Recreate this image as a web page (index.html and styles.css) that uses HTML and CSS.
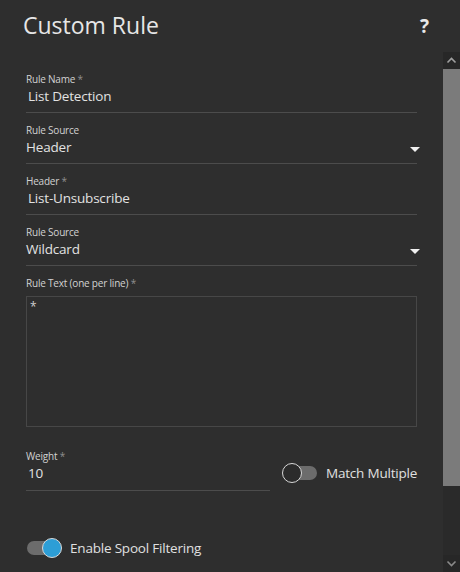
FILE: index.html
```html
<!DOCTYPE html>
<html>
<head>
<meta charset="utf-8">
<link rel="stylesheet" href="styles.css">
</head>
<body>
<div class="dialog">
  <div class="header">
    <div class="title">Custom Rule</div>
    <div class="help">?</div>
  </div>
  <div class="body">
    <div class="content">
      <div class="field">
        <div class="label">Rule Name <span class="req">*</span></div>
        <div class="value input">List Detection</div>
      </div>
      <div class="field">
        <div class="label">Rule Source</div>
        <div class="value select"><span>Header</span><span class="caret"></span></div>
      </div>
      <div class="field">
        <div class="label">Header <span class="req">*</span></div>
        <div class="value input">List-Unsubscribe</div>
      </div>
      <div class="field">
        <div class="label">Rule Source</div>
        <div class="value select"><span>Wildcard</span><span class="caret"></span></div>
      </div>
      <div class="area-field">
        <div class="label">Rule Text (one per line) <span class="req">*</span></div>
        <div class="textarea">*</div>
      </div>
      <div class="weight-row">
        <div class="field weight">
          <div class="label">Weight <span class="req">*</span></div>
          <div class="value input">10</div>
        </div>
        <div class="toggle-row">
          <div class="toggle off"><div class="track"></div><div class="knob"></div></div>
          <span class="toggle-label">Match Multiple</span>
        </div>
      </div>
      <div class="toggle-row spool">
        <div class="toggle on"><div class="track"></div><div class="knob"></div></div>
        <span class="toggle-label">Enable Spool Filtering</span>
      </div>
    </div>
    <div class="scrollbar">
      <div class="sb-btn up"><svg width="17" height="17" viewBox="0 0 17 17"><path d="M4.5 10.5 L8.5 6.5 L12.5 10.5" fill="none" stroke="#a0a0a0" stroke-width="1.6"/></svg></div>
      <div class="sb-thumb"></div>
      <div class="sb-track"></div>
      <div class="sb-btn down"><svg width="17" height="17" viewBox="0 0 17 17"><path d="M4.5 6.5 L8.5 10.5 L12.5 6.5" fill="none" stroke="#8a8a8a" stroke-width="1.6"/></svg></div>
    </div>
  </div>
</div>
</body>
</html>
```

FILE: styles.css
```css
html, body {
  margin: 0;
  padding: 0;
  background: #2e2e2e;
  font-family: "Open Sans", "Noto Sans", sans-serif;
  color: #e2e2e2;
}
.dialog {
  width: 460px;
  height: 572px;
  display: flex;
  flex-direction: column;
  overflow: hidden;
}
.header {
  height: 52px;
  flex: none;
  display: flex;
  align-items: flex-start;
  justify-content: space-between;
  padding: 0 31px 0 23px;
  box-sizing: border-box;
}
.title {
  font-size: 23px;
  line-height: 30px;
  margin-top: 10px;
  color: #e6e6e6;
}
.help {
  font-size: 19px;
  font-weight: 700;
  line-height: 26px;
  margin-top: 13px;
  color: #e8e8e8;
}
.body {
  flex: 1;
  display: flex;
  min-height: 0;
}
.content {
  flex: 1;
  padding: 21px 26px 0 26px;
}
.field {
  border-bottom: 1px solid #4c4c4c;
  padding-bottom: 6px;
  margin-bottom: 11px;
}
.label {
  font-size: 10px;
  line-height: 13px;
  color: #d2d2d2;
  letter-spacing: -0.2px;
}
.req {
  color: #8e8e8e;
}
.value {
  font-size: 13.5px;
  line-height: 20px;
  color: #e2e2e2;
  letter-spacing: -0.2px;
}
.value.input {
  padding-left: 2px;
}
.value.select {
  display: flex;
  justify-content: space-between;
  align-items: center;
}
.caret {
  width: 0;
  height: 0;
  border-left: 5.5px solid transparent;
  border-right: 5.5px solid transparent;
  border-top: 5.5px solid #f0f0f0;
  margin-right: -3px;
  margin-top: 4px;
}
.area-field .label {
  margin-bottom: 6px;
}
.textarea {
  height: 125px;
  border: 1px solid #474747;
  font-size: 12px;
  line-height: 16px;
  padding: 2px 3px;
  box-sizing: content-box;
  color: #cfcfcf;
}
.weight-row {
  display: flex;
  align-items: flex-start;
  gap: 12px;
  margin-top: 23px;
}
.field.weight {
  width: 244px;
  flex: none;
  padding-bottom: 7px;
  margin-bottom: 0;
}
.weight-row .toggle-row {
  margin-top: 13px;
  flex: none;
}
.toggle-row {
  display: flex;
  align-items: center;
  gap: 8px;
  white-space: nowrap;
}
.toggle {
  position: relative;
  width: 36px;
  height: 20px;
  flex: none;
}
.track {
  position: absolute;
  left: 1px;
  right: 1px;
  top: 3px;
  height: 14px;
  border-radius: 7px;
  background: #6c6c6c;
}
.knob {
  position: absolute;
  top: 0;
  width: 20px;
  height: 20px;
  box-sizing: border-box;
  border-radius: 50%;
  border: 1.5px solid #d8d8d8;
}
.toggle.off .knob {
  left: 0;
  background: #2b2b2b;
}
.toggle.on .knob {
  right: 0;
  background: #2d9ed6;
}
.toggle-label {
  font-size: 13.5px;
  line-height: 20px;
  color: #e0e0e0;
  letter-spacing: -0.2px;
}
.toggle-row.spool {
  margin-top: 47px;
}
.scrollbar {
  width: 17px;
  flex: none;
  display: flex;
  flex-direction: column;
  background: #2a2a2a;
}
.sb-btn {
  height: 17px;
  flex: none;
  background: #272727;
}
.sb-btn svg {
  display: block;
}
.sb-thumb {
  height: 417px;
  background: #7b7b7b;
  flex: none;
}
.sb-track {
  flex: 1;
}
```
